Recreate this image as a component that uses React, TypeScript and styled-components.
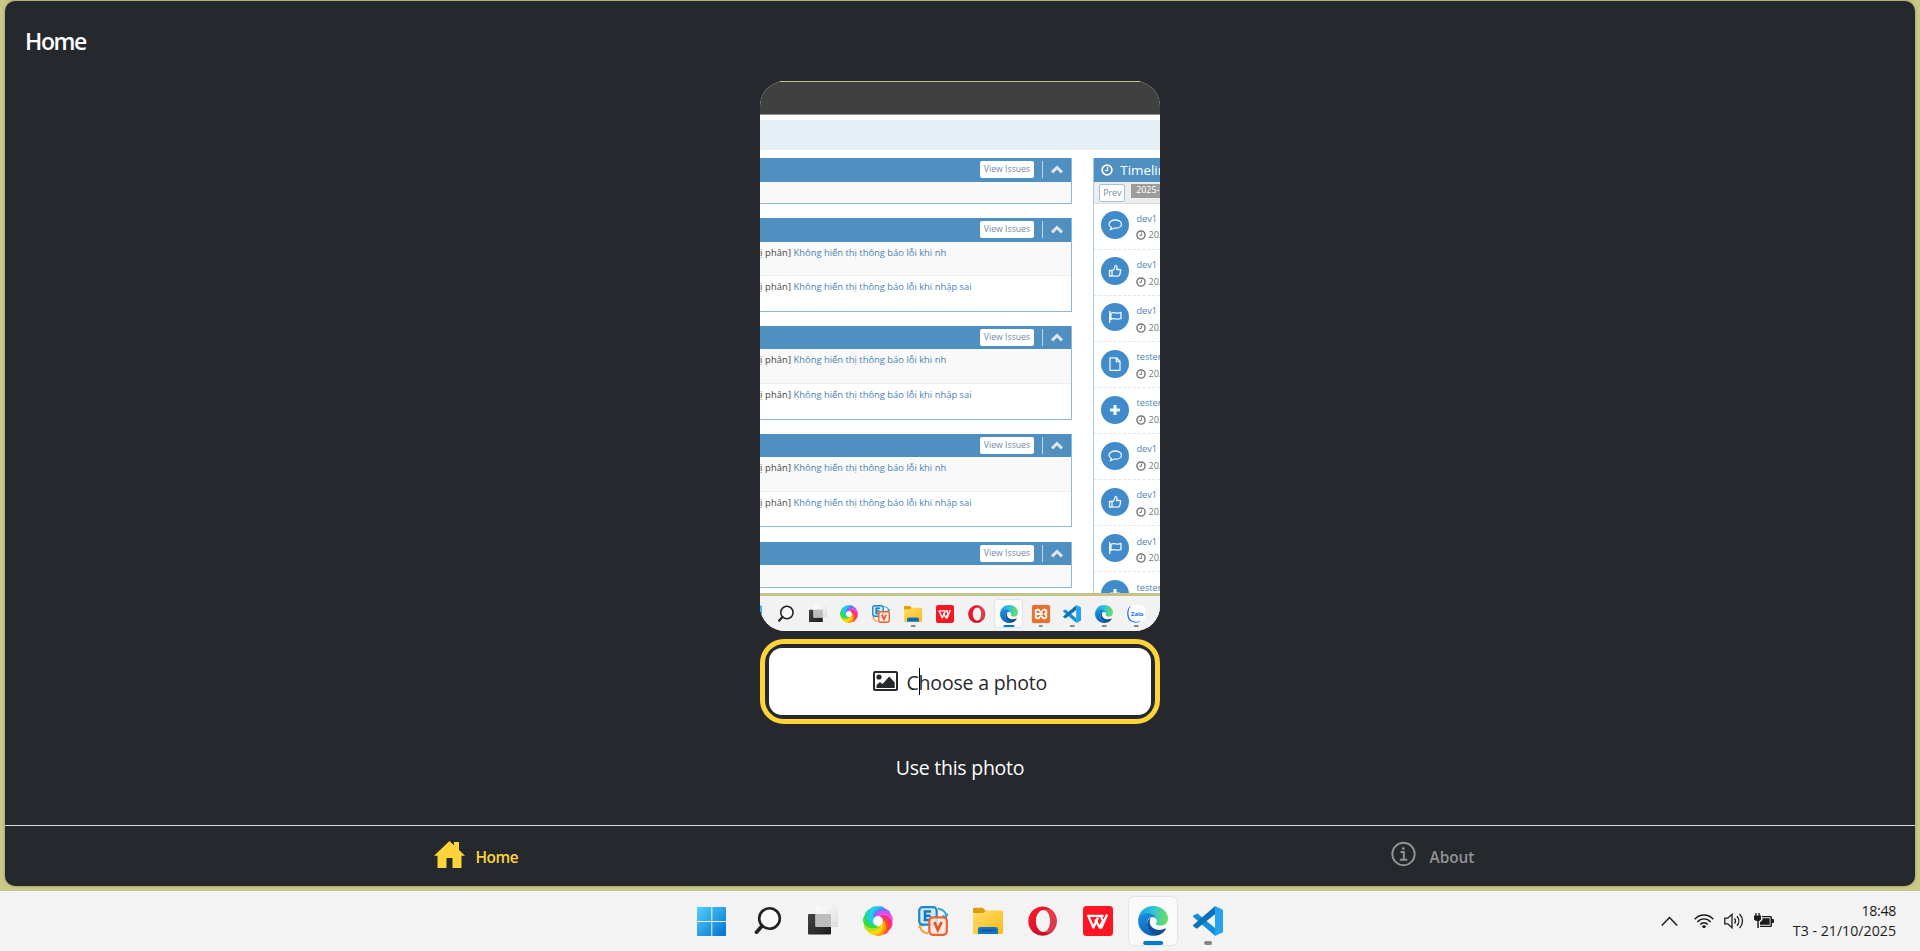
import React from "react";
import styled, { createGlobalStyle } from "styled-components";

const GlobalStyle = createGlobalStyle`
  * { box-sizing: border-box; }
  body { margin: 0; overflow: hidden; font-family: "Open Sans", "Noto Sans", sans-serif; }
`;

const Desktop = styled.div`
  width: 1920px;
  height: 951px;
  display: flex;
  flex-direction: column;
  background: #cbc98a;
`;
const AppWindow = styled.main`
  height: 885px;
  margin: 1px 5px 5px;
  flex: none;
  display: flex;
  flex-direction: column;
  background: #25282d;
  border-radius: 10px;
  box-shadow: 0 0 3px rgba(60, 60, 20, 0.45);
  overflow: hidden;
`;
const Title = styled.h1`
  margin: 0;
  padding: 24px 20px 0;
  height: 80px;
  font-size: 23px;
  line-height: 32px;
  font-weight: 650;
  letter-spacing: -1.4px;
  color: #fff;
`;
const Stack = styled.section`
  width: 400px;
  margin: 0 auto;
  flex: 1;
  display: flex;
  flex-direction: column;
`;

/* ---- photo preview ---- */
const Photo = styled.div`
  height: 550px;
  flex: none;
  display: flex;
  flex-direction: column;
  background: #fff;
  border-radius: 25px;
  overflow: hidden;
`;
const Band = styled.div<{ $h: number; $color: string }>`
  height: ${(p) => p.$h}px;
  flex: none;
  background: ${(p) => p.$color};
`;
const Issues = styled.div`
  height: 435px;
  flex: none;
  display: flex;
  gap: 21.3px;
  overflow: hidden;
`;
const PanelColumn = styled.div`
  width: 312px;
  flex: none;
  display: flex;
  flex-direction: column;
  gap: 14.3px;
`;
const Panel = styled.div`
  flex: none;
  border-right: 1px solid #8db9da;
  border-bottom: 1px solid #8db9da;
`;
const PanelHead = styled.div`
  height: 23.5px;
  display: flex;
  align-items: center;
  justify-content: flex-end;
  padding-right: 7px;
  background: #5090c1;
`;
const ViewIssues = styled.span`
  width: 54px;
  height: 17px;
  margin-right: 8px;
  border-radius: 2px;
  background: #fff;
  color: #6f8aa8;
  font-size: 8.7px;
  line-height: 17px;
  text-align: center;
  white-space: nowrap;
`;
const HeadRule = styled.span`
  width: 1px;
  height: 17px;
  margin-right: 7px;
  background: #c3d9ea;
`;
const IssueRow = styled.div<{ $h: number; $odd?: boolean }>`
  height: ${(p) => p.$h}px;
  padding-top: 4px;
  background: ${(p) => (p.$odd ? "#f9f9f9" : "#fff")};
  border-bottom: ${(p) => (p.$odd && p.$h > 30 ? "1px solid #ededed" : "0")};
  display: flex;
  font-size: 9.4px;
  line-height: 14px;
  white-space: pre;
  color: #4a82b8;
`;
const Category = styled.span`
  width: 33.5px;
  flex: none;
  display: flex;
  justify-content: flex-end;
  padding-right: 2.4px;
  letter-spacing: 0.1px;
  color: #444;
`;
const Timeline = styled.div`
  flex: 1;
  min-width: 0;
  border-left: 1px solid #a9cbe3;
  overflow: hidden;
`;
const TimelineHead = styled.div`
  height: 23.5px;
  display: flex;
  align-items: center;
  gap: 7px;
  padding-left: 7px;
  background: #5090c1;
  color: #fff;
  font-size: 13.4px;
  line-height: 22px;
  white-space: nowrap;
  svg { flex: none; }
`;
const TimelineBar = styled.div`
  height: 22px;
  display: flex;
  align-items: flex-start;
  gap: 6px;
  padding: 2px 0 0 5px;
  background: #ededed;
  border-bottom: 1px solid #ddd;
`;
const Prev = styled.span`
  width: 26px;
  height: 18px;
  flex: none;
  border: 1px solid #9cc2e0;
  border-radius: 2px;
  background: #fff;
  color: #6f8aa8;
  font-size: 8.8px;
  line-height: 17px;
  text-align: center;
`;
const DateTag = styled.span`
  height: 14px;
  padding-left: 5px;
  flex: none;
  width: 60px;
  background: #9d9d9d;
  color: #fff;
  font-size: 8.8px;
  line-height: 13.5px;
  white-space: nowrap;
`;
const Event = styled.div`
  height: 46.1px;
  display: flex;
  gap: 7px;
  padding: 7.8px 0 0 7.2px;
  border-bottom: 1px dashed #e2e6ea;
`;
const Dot = styled.span`
  width: 28px;
  height: 28px;
  flex: none;
  display: flex;
  align-items: center;
  justify-content: center;
  border-radius: 50%;
  background: #428bca;
`;
const EventText = styled.div`
  font-size: 9.2px;
  line-height: 14px;
  white-space: nowrap;
  color: #4a82b8;
  padding-top: 0.6px;
`;
const EventDate = styled.div`
  display: flex;
  align-items: center;
  gap: 2px;
  margin-top: 2.6px;
  color: #777;
`;
const MiniBar = styled.div`
  flex: 1;
  display: flex;
  margin-left: -22px;
  background: #f2f2f2;
`;

/* ---- controls ---- */
const ChooseFrame = styled.div`
  height: 85px;
  flex: none;
  margin-top: 8px;
  padding: 4px;
  border: 5px solid #ffd43b;
  border-radius: 24px;
`;
const ChooseButton = styled.div`
  height: 67px;
  display: flex;
  align-items: center;
  padding-left: 104px;
  border-radius: 13px;
  background: #fff;
  color: #25282d;
  font-size: 19.5px;
  line-height: 27px;
  white-space: nowrap;
  svg { margin: -1px 8.5px 0 0; flex: none; }
`;
const ChooseLabel = styled.span`
  position: relative;
  letter-spacing: -0.19px;
  padding-top: 1px;
`;
const Caret = styled.i`
  position: absolute;
  left: 12.5px;
  top: 0;
  width: 1px;
  height: 27px;
  background: #000;
`;
const UseLabel = styled.div`
  margin-top: 30px;
  font-size: 19.5px;
  line-height: 27px;
  letter-spacing: -0.25px;
  text-align: center;
  color: #fff;
`;
const Nav = styled.nav`
  height: 61px;
  flex: none;
  display: grid;
  grid-template-columns: 1fr 1fr;
  border-top: 1px solid #d9dde1;
`;
const NavItem = styled.div<{ $color: string; $shift: number }>`
  display: flex;
  align-items: flex-start;
  padding: 15px 0 0 ${(p) => p.$shift}px;
  color: ${(p) => p.$color};
  font-size: 15.4px;
  font-weight: 650;
  line-height: 22px;
`;
const NavLabel = styled.span<{ $gap: number; $track: number }>`
  margin: 6px 0 0 ${(p) => p.$gap}px;
  letter-spacing: ${(p) => p.$track}px;
`;

/* ---- taskbar ---- */
const Taskbar = styled.footer`
  height: 60px;
  flex: none;
  display: grid;
  grid-template-columns: 685.5px 550px 1fr;
  align-items: center;
  background: #f3f3f3;
`;
const Pinned = styled.div`
  grid-column: 2;
  display: flex;
`;
const Slot = styled.div<{ $w: number }>`
  width: ${(p) => p.$w}px;
  flex: none;
  display: flex;
  align-items: center;
  justify-content: center;
`;
const Tile = styled.div<{ $s: number; $active?: boolean }>`
  position: relative;
  width: ${(p) => p.$s}px;
  height: ${(p) => p.$s}px;
  display: flex;
  align-items: center;
  justify-content: center;
  border-radius: ${(p) => p.$s / 9}px;
  background: ${(p) => (p.$active ? "#fafafa" : "transparent")};
  box-shadow: ${(p) => (p.$active ? "0 0 1px 0.5px rgba(0,0,0,.06)" : "none")};
  svg { overflow: visible; }
`;
const Indicator = styled.i<{ $s: number; $active?: boolean }>`
  position: absolute;
  bottom: 0;
  left: 50%;
  transform: translateX(-50%);
  width: ${(p) => (p.$active ? p.$s * 0.41 : p.$s * 0.165)}px;
  height: ${(p) => p.$s * 0.082}px;
  border-radius: 4px;
  background: ${(p) => (p.$active ? "#0078d4" : "#868686")};
`;
const Tray = styled.div`
  display: flex;
  align-items: center;
  justify-content: flex-end;
  padding-right: 24px;
  color: #1b1b1b;
  svg { flex: none; display: block; }
`;
const TrayIcon = styled.svg<{ $gap?: number }>`
  margin-left: ${(p) => p.$gap ?? 10}px;
`;
const Clock = styled.div`
  width: 122px;
  font-size: 14.2px;
  line-height: 20px;
  text-align: right;
`;
const Time = styled.div`
  letter-spacing: -0.35px;
`;

/* ---- application logos, all on a 30 unit square ---- */
const LOGOS: Record<string, React.ReactNode> = {
  start: (
    <>
      <defs>
        <linearGradient id="win" x1="0" y1="0" x2="30" y2="30" gradientUnits="userSpaceOnUse">
          <stop stopColor="#52d0fb" /><stop offset="1" stopColor="#0070cf" />
        </linearGradient>
      </defs>
      <path transform="translate(-1 0.5)" fill="url(#win)" d="M1 .5h13.300v14H0V1.500a1 1 0 0 1 1-1zM15.300.5H28a1 1 0 0 1 1 1v13H15.300zM0 15.500h14.300v14H1a1 1 0 0 1-1-1zM15.300 15.500H29v13a1 1 0 0 1-1 1H15.300z" />
    </>
  ),
  search: (
    <g stroke="#222" fill="none" strokeLinecap="round">
      <circle cx="16.500" cy="12.500" r="10.300" fill="#fafafa" strokeWidth="2.600" />
      <path d="M9 20 3.500 26.200" strokeWidth="3.600" />
    </g>
  ),
  views: (
    <>
      <defs>
        <linearGradient id="tvd" x1="0" y1="0" x2="1" y2="1"><stop stopColor="#444" /><stop offset="1" stopColor="#1c1c1c" /></linearGradient>
        <linearGradient id="tvl" x1="0" y1="0" x2="1" y2="1"><stop stopColor="#fff" /><stop offset="1" stopColor="#dcdcdc" /></linearGradient>
      </defs>
      <rect x="0" y="8" width="23" height="20.500" rx="1" fill="url(#tvd)" />
      <rect x="7.500" y=".5" width="22.500" height="20.500" rx="1" fill="url(#tvl)" />
      <path d="M7.500 8H23v13H8.500a1 1 0 0 1-1-1z" fill="#bdbdbd" />
    </>
  ),
  swirl: (
    <>
      <circle cx="15" cy="15" r="10" fill="#fff" />
      {["#1a9bf5", "#8e5cf0", "#f03ff0", "#ff1f6a", "#ff3b1f", "#ff9800", "#ffd500", "#b8dc10", "#22d63c", "#10d890", "#18c8e8"].map((c, i) => (
        <path
          key={c}
          transform={`rotate(${i * 32.727 - 20} 15 15)`}
          d="M9.500 12C10 6 14.500.5 21 1.500 25 2.300 26.500 6 27 9 23 5.500 17.500 5.500 13.500 10.500z"
          fill={c}
          opacity=".88"
        />
      ))}
      <circle cx="15" cy="15" r="4.300" fill="#fff" />
    </>
  ),
  ev: (
    <>
      <path d="M20 2.500c5 1 8 4 8.500 8M29.500 7.500 28.300 11l-4-1.500" stroke="#36a3dd" strokeWidth="1.800" fill="none" />
      <path d="M10 27.500c-5-1-7.500-4-8-7M1 22l1-3 3.500 1" stroke="#f0a148" strokeWidth="1.800" fill="none" />
      <rect x="1.200" y="1.200" width="17.500" height="17.500" rx="3.500" fill="#cfe8f7" stroke="#1c87c9" strokeWidth="2.200" />
      <path d="M13 5.500H7v8.500h6M7 9.800h5.500" stroke="#1579b8" strokeWidth="2.500" fill="none" />
      <rect x="11.300" y="11.300" width="17.500" height="17.500" rx="3.500" fill="#ffe9d9" fillOpacity=".8" stroke="#ea6332" strokeWidth="2.200" />
      <path d="M16.500 16l3.300 8 3.800-8" stroke="#e2552a" strokeWidth="2.700" fill="none" />
    </>
  ),
  folder: (
    <>
      <defs>
        <linearGradient id="fold" x1="0" y1="0" x2="1" y2="1"><stop stopColor="#ffdc6a" /><stop offset="1" stopColor="#fbbb17" /></linearGradient>
      </defs>
      <path d="M0 3a1.200 1.200 0 0 1 1.200-1.200h8.500L13 5v5H0z" fill="#dd9c08" />
      <path d="M0 7h10l3-2.500h15.800A1.200 1.200 0 0 1 30 5.700V27a1 1 0 0 1-1 1H1a1 1 0 0 1-1-1z" fill="url(#fold)" />
      <path d="M5 28v-4.500a2.500 2.500 0 0 1 2.500-2.500h15a2.500 2.500 0 0 1 2.500 2.500V28z" fill="#1272c4" />
      <path d="M8.500 24.500h13" stroke="#0b4c8c" strokeWidth="1.200" />
    </>
  ),
  opera: (
    <>
      <defs>
        <linearGradient id="op" x1="0" y1="0" x2="1" y2="1"><stop stopColor="#ff1b2d" /><stop offset=".5" stopColor="#e0122a" /><stop offset="1" stopColor="#a50e22" /></linearGradient>
      </defs>
      <path fillRule="evenodd" fill="url(#op)" d="M14.500.5a14.300 14.600 0 1 0 .1 0zM15.500 4c4 0 6.600 4.700 6.600 11s-2.600 11-6.600 11-7.600-4.700-7.600-11 3.600-11 7.600-11z" />
      <path fill="#f0555c" d="M15.500 4c3-1.500 6-1.200 8.500.2 6 5.500 6 16 0 21.500-2.500 1.500-5.500 1.800-8.500.3 4 0 6.600-4.700 6.600-11s-2.600-11-6.600-11z" opacity=".6" />
    </>
  ),
  wps: (
    <>
      <rect width="30" height="30" rx="3.500" fill="#ff1522" />
      <g fill="none" stroke="#fff" strokeWidth="2.300" strokeLinejoin="round">
        <path d="M20.500 9.800H5.200L10.400 21.500 15 11.500" />
        <path d="M12.200 13.500 16.700 21.500 20 14.500 17.500 10" />
        <path d="M16.700 21.500 18.500 21.500 24 8.500" />
      </g>
    </>
  ),
  edge: (
    <>
      <defs>
        <linearGradient id="edT" x1="0" y1="8" x2="30" y2="12" gradientUnits="userSpaceOnUse"><stop stopColor="#1b9de0" /><stop offset=".45" stopColor="#2fc2dc" /><stop offset="1" stopColor="#6be05b" /></linearGradient>
        <linearGradient id="edL" x1="0" y1="8" x2="12" y2="30" gradientUnits="userSpaceOnUse"><stop stopColor="#1b93e0" /><stop offset="1" stopColor="#0a60b8" /></linearGradient>
        <linearGradient id="edB" x1="9" y1="15" x2="26" y2="28" gradientUnits="userSpaceOnUse"><stop stopColor="#0e55a0" /><stop offset="1" stopColor="#124b8f" /></linearGradient>
      </defs>
      <path fill="url(#edT)" d="M.2 13.500C1 5.500 7.300 0 15 0c8.500 0 15 6 15 12.500 0 4.500-3.500 7.200-7.300 7.200-3.500 0-5-1.200-5-2 0-.6 1-1 1-2.900 0-2.400-2.400-5-6-5C7 9.800 2 11.500.2 16z" />
      <path fill="url(#edL)" d="M.1 14.500C1 10 5 7.300 9.300 7.300c4.500 0 8.700 2.700 9.300 6.500-1.200-2-2.600-2.700-4.100-2.700-3.500 0-5.500 3.700-5.500 7.400 0 5 3.800 10 9.800 10.900A15 15 0 0 1 .1 14.500z" />
      <path fill="url(#edB)" d="M12.500 11.700c-2 1.500-3.500 4-3.500 6.800 0 6 4.500 10.500 9.800 11 4.200-.8 7.200-3.200 9-6.300.4-.7-.2-1-.8-.7-1.600.9-3.400 1.400-5.500 1.400-5.500 0-9.700-3.300-9.700-7.300 0-2 .5-3.600.7-4.900z" />
      <path fill="#fafafa" d="M13 12.500c2-.9 5.300.1 5.300 2.900 0 1-1 1.700-.8 2.500.2 1 2 1.900 4.500 1.900 1.500 0 3-.4 4-1-1.500 2.500-4 3.500-6.500 3.200-4-.6-8.700-4.500-6.500-9.500z" />
    </>
  ),
  code: (
    <>
      <path d="M4.500 7.500.6 9.300c-.8.6-.8 1.200 0 2L22 29.700v-7.800z" fill="#158fd8" />
      <path d="M.5 18.800 22 .3v8L4.500 22.200c-.6.300-1 .3-1.500 0L.4 20.200c-.5-.5-.5-1 .1-1.400z" fill="#0a72ba" />
      <path d="M22 0l7 3.200c.6.300 1 .8 1 1.500v20.600c0 .7-.4 1.200-1 1.500L22 30z" fill="#26a3ef" />
    </>
  ),
  xampp: (
    <>
      <rect x=".5" y=".5" width="29" height="29" rx="2.500" fill="#e9702a" stroke="#c9571c" />
      <path d="M12.800 15H9.700a3.600 3.600 0 1 1 3.300-4.500c.5 1.500 3.500 1.500 4 0A3.600 3.600 0 1 1 20.300 15a3.600 3.600 0 1 1-3.300 4.500c-.5-1.500-3.500-1.500-4 0A3.600 3.600 0 1 1 9.700 15M12 15h6" fill="none" stroke="#fff" strokeWidth="3" />
    </>
  ),
  zalo: (
    <>
      <rect width="30" height="30" rx="9" fill="#fff" />
      <path d="M7 1C1 4-.5 12 1 20c1 5 5 8.500 11 9 5 .3 9-.3 12-2-8 1.500-17 1-20-5C1.500 16 2 6 7 1z" fill="#1268f3" />
      <text x="17" y="18" textAnchor="middle" fontSize="9.800" fontWeight="700" fontFamily="Open Sans" fill="#1268f3">Zalo</text>
    </>
  ),
};

const Logo = ({ name, size }: { name: string; size: number }) => (
  <svg width={size} height={size} viewBox="0 0 30 30">{LOGOS[name]}</svg>
);

type AppEntry = { name: string; state?: "open" | "active" };

const Apps = ({ items, pitch, tile, icon }: { items: AppEntry[]; pitch: number; tile: number; icon: number }) => (
  <>
    {items.map((a, i) => (
      <Slot key={i} $w={pitch}>
        <Tile $s={tile} $active={a.state === "active"}>
          <Logo name={a.name} size={icon} />
          {a.state && <Indicator $s={tile} $active={a.state === "active"} />}
        </Tile>
      </Slot>
    ))}
  </>
);

const pinned: AppEntry[] = [
  { name: "start" }, { name: "search" }, { name: "views" }, { name: "swirl" }, { name: "ev" },
  { name: "folder" }, { name: "opera" }, { name: "wps" }, { name: "edge", state: "active" }, { name: "code", state: "open" },
];
const miniPinned: AppEntry[] = [
  { name: "start" }, { name: "search" }, { name: "views" }, { name: "swirl" }, { name: "ev" },
  { name: "folder", state: "open" }, { name: "wps" }, { name: "opera" }, { name: "edge", state: "active" },
  { name: "xampp", state: "open" }, { name: "code", state: "open" }, { name: "edge", state: "open" }, { name: "zalo", state: "open" },
];

/* ---- timeline glyphs ---- */
const ClockGlyph = ({ size }: { size: number }) => (
  <svg width={size} height={size} viewBox="0 0 12 12" fill="none" stroke="currentColor" strokeWidth="1.700">
    <circle cx="6" cy="6" r="4.900" />
    <path d="M6.500 3v3.500H4" strokeWidth="1.200" />
  </svg>
);
const GLYPHS: Record<string, React.ReactNode> = {
  comment: <path d="M7.300 2C3.800 2 1 3.900 1 6.300c0 1.400 1 2.600 2.400 3.300-.1.900-.6 1.500-1.200 2.100 1.600-.1 2.700-.8 3.500-1.600.5.1 1 .1 1.600.1 3.500 0 6.200-1.700 6.200-4S10.800 2 7.300 2z" />,
  thumb: <path d="M1.500 6.500H4v5.500H1.500zM4 7c1.500-.8 2.500-2.300 2.800-4 .1-1 .4-1.700 1.300-1.500 1.300.4 1.200 2.200.4 4h3c1.300 0 1.500 1.300.8 2 .4.7.2 1.300-.3 1.700.2.800 0 1.300-.5 1.600 0 1-.5 1.400-1.500 1.400H7.300C6 12.200 5 11.700 4 11.500" />,
  flag: <path d="M1.700 1v12M3 3.400c3.500-2.400 5.500 1.200 10-1v6c-4.500 2.200-6.500-1.400-10 1z" />,
  file: <path d="M2 .8h6.500L12 4.300v9H2zM8.300.8v3.700H12" />,
  plus: <path d="M7 2v10M2 7h10" strokeWidth="3.200" />,
};
const Glyph = ({ name }: { name: string }) => (
  <svg width="14" height="14" viewBox="0 0 14 14" fill="none" stroke="#eef6fc" strokeWidth="1.300" strokeLinejoin="round">{GLYPHS[name]}</svg>
);
const events: [string, string][] = [
  ["comment", "dev1"], ["thumb", "dev1"], ["flag", "dev1"], ["file", "tester"], ["plus", "tester"],
  ["comment", "dev1"], ["thumb", "dev1"], ["flag", "dev1"], ["plus", "tester"],
];

const IssuePanel = ({ full }: { full?: boolean }) => (
  <Panel>
    <PanelHead>
      <ViewIssues>View Issues</ViewIssues>
      <HeadRule />
      <svg width="14" height="10" viewBox="0 0 14 10"><path d="M2 7.300 7 2.500l5 4.800" fill="none" stroke="#dfe5ea" strokeWidth="3" /></svg>
    </PanelHead>
    {full ? (
      <>
        <IssueRow $h={34.6} $odd><Category>ị phân]</Category>Không hiển thị thông báo lỗi khi nh</IssueRow>
        <IssueRow $h={34.5}><Category>ị phân]</Category>Không hiển thị thông báo lỗi khi nhập sai</IssueRow>
      </>
    ) : (
      <IssueRow $h={21.3} $odd />
    )}
  </Panel>
);

export default function App() {
  return (
    <Desktop>
      <GlobalStyle />
      <AppWindow>
        <Title>Home</Title>
        <Stack>
          <Photo>
            <Band $h={1} $color="#c0bd84" />
            <Band $h={32} $color="#404040" />
            <Band $h={1} $color="#909090" />
            <Band $h={5} $color="#fff" />
            <Band $h={30} $color="#e4eff6" />
            <Band $h={8} $color="#fff" />
            <Issues>
              <PanelColumn>
                <IssuePanel />
                <IssuePanel full />
                <IssuePanel full />
                <IssuePanel full />
                <IssuePanel />
              </PanelColumn>
              <Timeline>
                <TimelineHead><ClockGlyph size={12} />Timelin</TimelineHead>
                <TimelineBar><Prev>Prev</Prev><DateTag>2025-1</DateTag></TimelineBar>
                {events.map(([icon, who], i) => (
                  <Event key={i}>
                    <Dot><Glyph name={icon} /></Dot>
                    <EventText>
                      {who}
                      <EventDate><ClockGlyph size={10} />202</EventDate>
                    </EventText>
                  </Event>
                ))}
              </Timeline>
            </Issues>
            <Band $h={3} $color="#c6c285" />
            <MiniBar><Apps items={miniPinned} pitch={31.85} tile={27} icon={18} /></MiniBar>
          </Photo>
          <ChooseFrame>
            <ChooseButton>
              <svg width="25" height="20" viewBox="0 0 25 20">
                <rect x="1" y="1" width="23" height="18" rx="1" fill="none" stroke="#25282d" strokeWidth="2" />
                <circle cx="6" cy="6" r="2.600" fill="#25282d" />
                <path d="M3.500 17v-3L7 11l2.500 2 6.700-7.500 5.500 6V17z" fill="#25282d" />
              </svg>
              <ChooseLabel>Choose a photo<Caret /></ChooseLabel>
            </ChooseButton>
          </ChooseFrame>
          <UseLabel>Use this photo</UseLabel>
        </Stack>
        <Nav>
          <NavItem $color="#ffd43b" $shift={429}>
            <svg width="31" height="27" viewBox="0 0 31 27" fill="currentColor">
              <path d="M15.500 0 20 4.300V1h5v8l6 5.700h-3.500V27H18.500V17h-6v10h-9V14.700H0z" />
            </svg>
            <NavLabel $gap={10.5} $track={-0.5}>Home</NavLabel>
          </NavItem>
          <NavItem $color="#929292" $shift={431}>
            <svg width="25" height="26" viewBox="0 0 25 26" fill="none" stroke="currentColor">
              <circle cx="12.500" cy="13" r="11.200" strokeWidth="1.900" />
              <path d="M9.500 11h3.300v7.500M8.800 18.800h7.500" strokeWidth="1.900" />
              <circle cx="12.300" cy="7.500" r="1.100" fill="currentColor" strokeWidth=".8" />
            </svg>
            <NavLabel $gap={13.5} $track={-0.05}>About</NavLabel>
          </NavItem>
        </Nav>
      </AppWindow>
      <Taskbar>
        <Pinned><Apps items={pinned} pitch={55} tile={48} icon={30} /></Pinned>
        <Tray>
          <svg width="17" height="11" viewBox="0 0 17 11"><path d="M.8 9.500 8.500 1.500l7.700 8" fill="none" stroke="currentColor" strokeWidth="1.500" /></svg>
          <TrayIcon $gap={16} width="20" height="16" viewBox="0 0 20 16">
            <g fill="none" stroke="currentColor" strokeWidth="1.400">
              <path d="M.7 6.200c5.200-5.600 13.400-5.600 18.600 0M3.400 8.900c3.700-4 9.500-4 13.200 0M6.200 11.500c2.200-2.300 5.400-2.300 7.600 0" />
            </g>
            <circle cx="10" cy="13.600" r="1.700" fill="currentColor" />
          </TrayIcon>
          <TrayIcon width="20" height="16" viewBox="0 0 20 16" fill="none" stroke="currentColor" strokeWidth="1.300">
            <path d="M.8 5.200h3L8 1.300v13.400l-4.200-3.900h-3zM10.500 5.500c1.200 1.500 1.200 3.500 0 5M13 3.200c2.500 2.800 2.500 6.800 0 9.600M15.500 1c4 4 4 10 0 14" />
          </TrayIcon>
          <TrayIcon width="20" height="16" viewBox="0 0 20 16" fill="currentColor">
            <path d="M1.300 0h1.300v2.500h1.800V0h1.300v2.500H7V6c0 1-1 1.800-2.200 2v7H3.300V8C1 7.800 0 7 0 6V2.500h1.300z" />
            <path d="M8 3h8.500c.8 0 1.500.7 1.500 1.500V6h1.200c.4 0 .8.300.8.800v2.400c0 .5-.4.800-.8.800H18v2.500c0 .8-.7 1.500-1.500 1.500H6v-1.300h10.500V4.300H8z" />
            <path d="M8.500 5.200h7.200v6.600H6V9c1.500-.6 2.500-1.500 2.500-3z" />
          </TrayIcon>
          <Clock><Time>18:48</Time>T3 - 21/10/2025</Clock>
        </Tray>
      </Taskbar>
    </Desktop>
  );
}
